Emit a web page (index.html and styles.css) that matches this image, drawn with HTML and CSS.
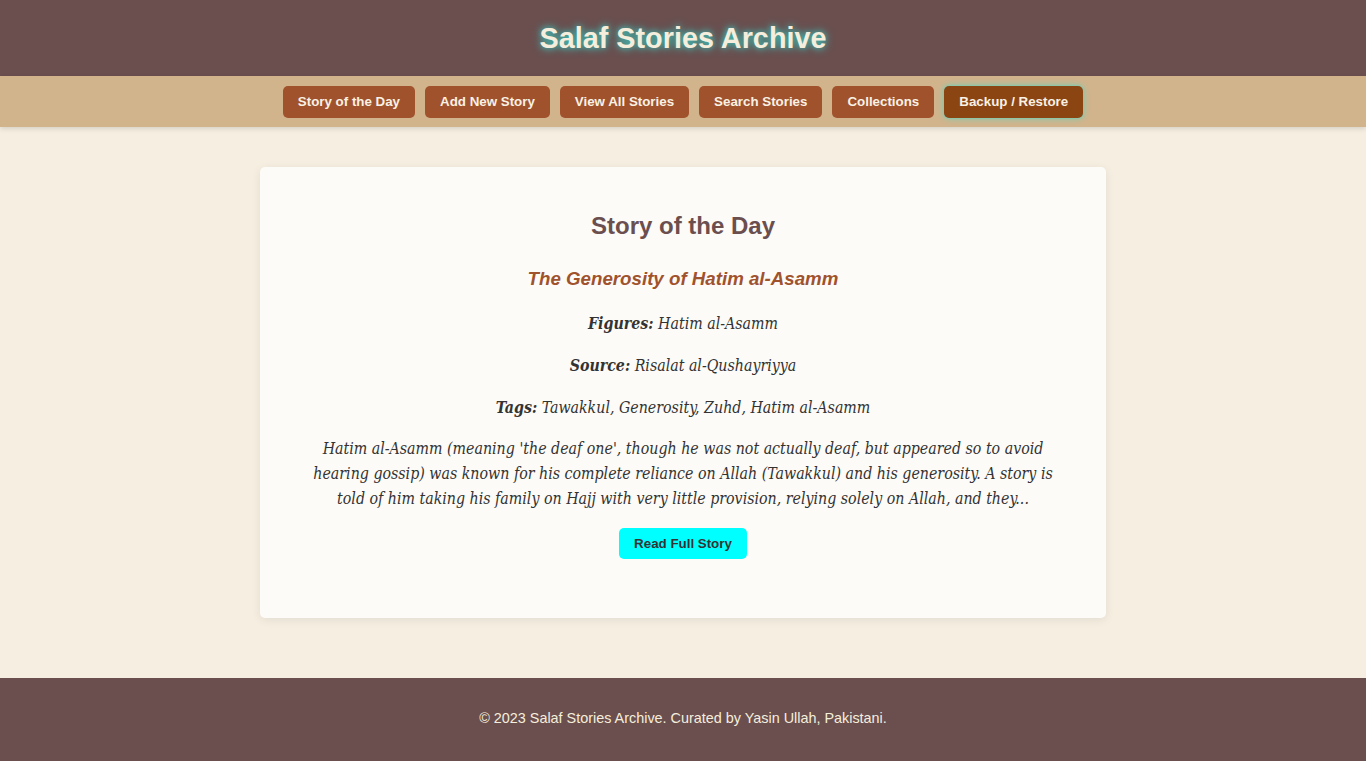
FILE: index.html
```html
<!DOCTYPE html>
<html lang="en">
<head>
<meta charset="utf-8">
<title>Salaf Stories Archive</title>
<link rel="stylesheet" href="styles.css">
</head>
<body>
<header class="site-header">
  <h1 class="site-title">Salaf Stories Archive</h1>
</header>
<nav class="site-nav">
  <button class="nav-btn">Story of the Day</button>
  <button class="nav-btn">Add New Story</button>
  <button class="nav-btn">View All Stories</button>
  <button class="nav-btn">Search Stories</button>
  <button class="nav-btn">Collections</button>
  <button class="nav-btn active">Backup / Restore</button>
</nav>
<main class="main">
  <section class="card">
    <h2 class="card-title">Story of the Day</h2>
    <h3 class="story-title">The Generosity of Hatim al-Asamm</h3>
    <p class="meta"><strong>Figures:</strong> Hatim al-Asamm</p>
    <p class="meta"><strong>Source:</strong> Risalat al-Qushayriyya</p>
    <p class="meta meta-last"><strong>Tags:</strong> Tawakkul, Generosity, Zuhd, Hatim al-Asamm</p>
    <p class="excerpt">Hatim al-Asamm (meaning 'the deaf one', though he was not actually deaf, but appeared so to avoid hearing gossip) was known for his complete reliance on Allah (Tawakkul) and his generosity. A story is told of him taking his family on Hajj with very little provision, relying solely on Allah, and they...</p>
    <button class="read-btn">Read Full Story</button>
  </section>
</main>
<footer class="site-footer">
  <p>&copy; 2023 Salaf Stories Archive. Curated by Yasin Ullah, Pakistani.</p>
</footer>
</body>
</html>
```
FILE: styles.css
```css
* { box-sizing: border-box; }
html, body { margin: 0; padding: 0; }
body {
  background: #f5eee1;
  font-family: "Liberation Sans", Arial, sans-serif;
  color: #333;
}
.site-header {
  background: #6b4f4f;
  height: 76px;
  display: flex;
  align-items: center;
  justify-content: center;
}
.site-title {
  margin: 0;
  font-size: 28.8px;
  font-weight: bold;
  color: #f5eedc;
  text-shadow: 0 0 6px #3cc0b8, 0 0 10px rgba(60, 192, 184, 0.7);
}
.site-nav {
  background: #d2b48c;
  height: 51px;
  display: flex;
  align-items: center;
  justify-content: center;
  gap: 10px;
  box-shadow: 0 2px 5px rgba(0,0,0,0.12);
  position: relative;
}
.nav-btn {
  background: #a0522d;
  color: #f8f1e4;
  border: none;
  border-radius: 5px;
  height: 32px;
  padding: 0 15px;
  font-family: "Liberation Sans", Arial, sans-serif;
  font-weight: bold;
  font-size: 13.333px;
}
.nav-btn.active {
  background: #8b4513;
  box-shadow: 0 0 7px rgba(95, 211, 190, 0.9), 0 0 2px #5fd3be;
}
.main {
  padding: 40px 0 60px;
  display: flex;
  justify-content: center;
}
.card {
  width: 846px;
  background: #fdfbf7;
  border-radius: 5px;
  box-shadow: 0 2px 10px rgba(0,0,0,0.08);
  padding: 44px 40px 59px;
  text-align: center;
}
.card-title {
  margin: 0 0 26px;
  font-size: 24px;
  font-weight: bold;
  color: #6b4f4f;
  line-height: 30px;
}
.story-title {
  margin: 0 0 20px;
  font-size: 18.72px;
  font-style: italic;
  font-weight: bold;
  color: #a0522d;
  line-height: 24px;
}
.meta, .excerpt {
  font-family: "DejaVu Serif", Georgia, serif;
  font-stretch: condensed;
  font-style: italic;
  font-size: 15.8px;
  color: #333;
  margin: 0 0 16px;
  line-height: 26px;
}
.meta.meta-last { margin-bottom: 15px; }
.meta strong { font-weight: bold; }
.excerpt { line-height: 25px; margin-bottom: 17px; }
.read-btn {
  background: #00ffff;
  color: #333;
  border: none;
  border-radius: 5px;
  height: 31px;
  padding: 0 15px;
  font-family: "Liberation Sans", Arial, sans-serif;
  font-weight: bold;
  font-size: 13.333px;
}
.site-footer {
  background: #6b4f4f;
  padding: 31px 0 36px;
  text-align: center;
}
.site-footer p {
  margin: 0;
  color: #f5eedc;
  font-size: 14.4px;
  line-height: 18px;
}
```
